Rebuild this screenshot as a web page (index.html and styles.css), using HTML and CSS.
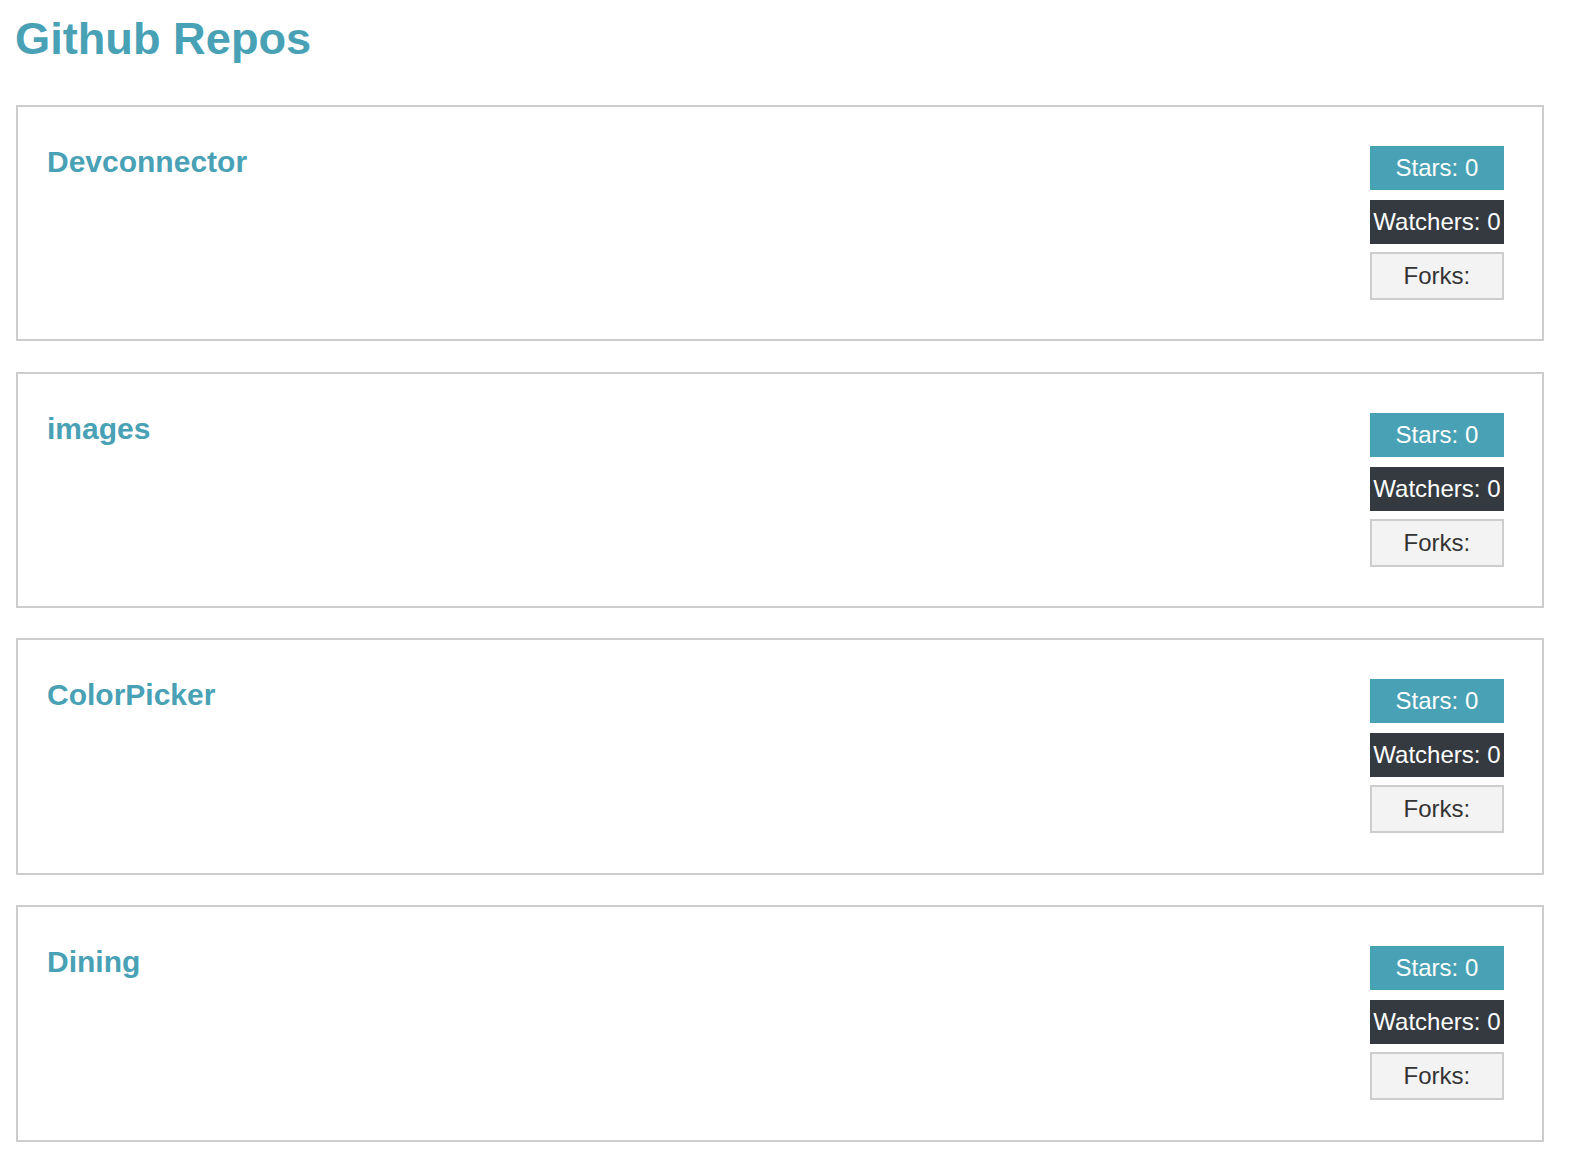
FILE: index.html
```html
<!DOCTYPE html>
<html lang="en">
<head>
<meta charset="utf-8">
<title>Github Repos</title>
<link rel="stylesheet" href="styles.css">
</head>
<body>
<div class="page">
  <h1 class="page-title">Github Repos</h1>

  <div class="repo">
    <h4 class="repo-name">Devconnector</h4>
    <div class="repo-stats">
      <span class="badge badge-primary">Stars: 0</span>
      <span class="badge badge-dark">Watchers: 0</span>
      <span class="badge badge-light">Forks:</span>
    </div>
  </div>

  <div class="repo">
    <h4 class="repo-name">images</h4>
    <div class="repo-stats">
      <span class="badge badge-primary">Stars: 0</span>
      <span class="badge badge-dark">Watchers: 0</span>
      <span class="badge badge-light">Forks:</span>
    </div>
  </div>

  <div class="repo">
    <h4 class="repo-name">ColorPicker</h4>
    <div class="repo-stats">
      <span class="badge badge-primary">Stars: 0</span>
      <span class="badge badge-dark">Watchers: 0</span>
      <span class="badge badge-light">Forks:</span>
    </div>
  </div>

  <div class="repo">
    <h4 class="repo-name">Dining</h4>
    <div class="repo-stats">
      <span class="badge badge-primary">Stars: 0</span>
      <span class="badge badge-dark">Watchers: 0</span>
      <span class="badge badge-light">Forks:</span>
    </div>
  </div>
</div>
</body>
</html>
```

FILE: styles.css
```css
* {
  box-sizing: border-box;
}

body {
  margin: 0;
  background: #fff;
  font-family: "Liberation Sans", Arial, Helvetica, sans-serif;
  color: #333;
}

.page {
  padding: 13px 32px 40px 16px;
}

.page-title {
  margin: 0 0 39.8px -1px;
  font-size: 45.2px;
  font-weight: bold;
  line-height: normal;
  color: #48a1b5;
}

.repo {
  display: flex;
  justify-content: space-between;
  align-items: flex-start;
  border: 2px solid #cdcdcd;
  padding: 39px 38px 39.6px 29px;
  margin-bottom: 30.2px;
}

.repo-name {
  margin: -1px 0 0 0;
  font-size: 30px;
  font-weight: bold;
  line-height: normal;
  color: #48a1b5;
}

.repo-stats {
  display: flex;
  flex-direction: column;
  align-items: stretch;
}

.badge {
  display: block;
  text-align: center;
  font-size: 24px;
  line-height: 28px;
  padding: 8px 3.5px;
}

.badge-primary {
  background: #48a1b5;
  color: #fff;
  margin-bottom: 10px;
}

.badge-dark {
  background: #343a40;
  color: #fff;
  margin-bottom: 8px;
}

.badge-light {
  background: #f3f3f3;
  color: #333;
  border: 2px solid #cdcdcd;
}
```
